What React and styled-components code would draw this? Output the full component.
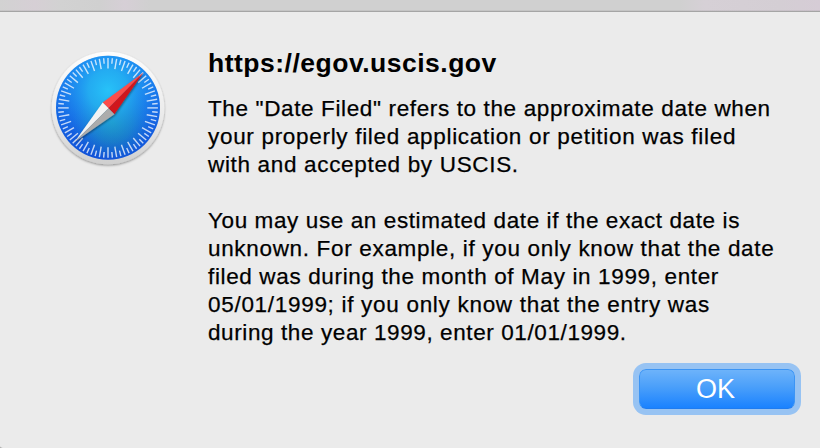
import React from "react";
import styled, { createGlobalStyle } from "styled-components";

const GlobalStyle = createGlobalStyle`
  * {
    box-sizing: border-box;
  }
  body {
    margin: 0;
    background: #a8a8a8;
    color: #000;
    font-family: "Liberation Sans", Arial, sans-serif;
  }
`;

const Dialog = styled.main`
  display: flex;
  flex-direction: column;
  width: 820px;
  height: 448px;
  overflow: hidden;
  border-bottom-left-radius: 5px 2px;
  background: #ebebeb;
`;

const Toolbar = styled.div`
  flex: none;
  height: 12px;
  border-bottom: 1px solid #a5a5a5;
  background:
    linear-gradient(rgba(0, 0, 0, 0) 10px, rgba(0, 0, 0, 0.06) 10px),
    linear-gradient(90deg, #d2d2d2 0, #d6cfd5 35px, #d2d2d2 60px, #d0d0d0 100px,
      #d6cfd6 125px, #d0d0d0 150px, #d0d0d0 680px, #d6d0d6 705px, #d4ced4 780px, #d6ccd6 820px);
`;

const Content = styled.div`
  display: flex;
  padding: 32px 0 0 44px;
`;

const Message = styled.section`
  padding: 4px 0 0 32px;
`;

const Title = styled.h1`
  margin: 0 0 17px;
  font-size: 26.5px;
  line-height: 30px;
  letter-spacing: 0.5px;
  white-space: nowrap;
`;

const Paragraph = styled.p`
  margin: 0 0 28px;
  font-size: 22.5px;
  line-height: 28px;
  -webkit-text-stroke: 0.25px #000;
`;

const Line = styled.span`
  display: block;
  letter-spacing: ${({ $spacing }) => $spacing}px;
  white-space: nowrap;
`;

const Actions = styled.div`
  display: flex;
  justify-content: flex-end;
  margin-top: -6px;
  padding-right: 25px;
`;

const Button = styled.button`
  width: 156px;
  height: 40px;
  padding: 0 3px 0 0;
  border: 1px solid #3c95f5;
  border-bottom-color: #1f7cf0;
  border-radius: 7px;
  background: linear-gradient(#6db3fa, #4a9ffa 45%, #1a82ff);
  box-shadow: 0 0 0 6px #97c3f3;
  color: #fff;
  font-family: inherit;
  font-size: 27px;
  line-height: 38px;
`;

const Icon = styled.svg`
  flex: none;
  width: 132px;
  height: 132px;
`;

const ticks = Array.from({ length: 72 }, (_, i) => i);

const paragraphs = [
  [
    ['The "Date Filed" refers to the approximate date when', 0.63],
    ["your properly filed application or petition was filed", 0.69],
    ["with and accepted by USCIS.", 0.67],
  ],
  [
    ["You may use an estimated date if the exact date is", 0.6],
    ["unknown. For example, if you only know that the date", 0.67],
    ["filed was during the month of May in 1999, enter", 0.64],
    ["05/01/1999; if you only know that the entry was", 0.7],
    ["during the year 1999, enter 01/01/1999.", 0.6],
  ],
];

const CompassIcon = () => (
  <Icon viewBox="0 0 132 132">
    <defs>
      <linearGradient id="rim" x1="0" y1="0" x2="0" y2="1">
        <stop offset="0" stopColor="#fdfdfd" />
        <stop offset="0.6" stopColor="#e9e9e9" />
        <stop offset="1" stopColor="#cfcfcf" />
      </linearGradient>
      <linearGradient id="dial" x1="0" y1="0" x2="0" y2="1">
        <stop offset="0" stopColor="#1c86f3" />
        <stop offset="1" stopColor="#1150d8" />
      </linearGradient>
      <radialGradient id="glow" cx="0.5" cy="0.33" r="0.54">
        <stop offset="0" stopColor="#27c2f8" />
        <stop offset="0.35" stopColor="#25b4f2" stopOpacity="0.85" />
        <stop offset="1" stopColor="#1c86f3" stopOpacity="0" />
      </radialGradient>
      <radialGradient id="teal" cx="0.54" cy="0.64" r="0.38">
        <stop offset="0" stopColor="#1c9ba9" stopOpacity="0.95" />
        <stop offset="0.5" stopColor="#1c8fb8" stopOpacity="0.6" />
        <stop offset="1" stopColor="#1c80d0" stopOpacity="0" />
      </radialGradient>
      <filter id="drop" x="-20%" y="-20%" width="140%" height="140%">
        <feDropShadow dx="0" dy="1.2" stdDeviation="1.2" floodOpacity="0.4" />
      </filter>
      <filter id="needleShadow" x="-20%" y="-20%" width="140%" height="140%">
        <feDropShadow dx="0.6" dy="1" stdDeviation="0.8" floodOpacity="0.5" />
      </filter>
    </defs>
    <circle cx="64" cy="64" r="56.3" fill="url(#rim)" filter="url(#drop)" />
    <circle cx="64" cy="63.7" r="52" fill="url(#dial)" />
    <circle cx="64" cy="63.7" r="52" fill="url(#teal)" />
    <circle cx="64" cy="63.7" r="52" fill="url(#glow)" />
    <g stroke="#fff" strokeOpacity="0.75" strokeWidth="1.4">
      {ticks.map((i) => (
        <line
          key={i}
          x1="64"
          x2="64"
          y1="14"
          y2={i % 2 ? 19.6 : 24.6}
          transform={`rotate(${i * 5} 64 63.9)`}
        />
      ))}
    </g>
    <g filter="url(#needleShadow)">
      <path d="M99.5 28.5 58.7 58.5 64.5 64.3Z" fill="#fb4d4b" />
      <path d="M99.5 28.5 64.5 64.3 70.4 70.2Z" fill="#d0161c" />
      <path d="M30.5 98 58.7 58.5 64.5 64.3Z" fill="#f3f3f3" />
      <path d="M30.5 98 64.5 64.3 70.4 70.2Z" fill="#acacac" />
    </g>
  </Icon>
);

export default function App() {
  return (
    <Dialog>
      <GlobalStyle />
      <Toolbar />
      <Content>
        <CompassIcon />
        <Message>
          <Title>https://egov.uscis.gov</Title>
          {paragraphs.map((lines, index) => (
            <Paragraph key={index}>
              {lines.map(([text, spacing]) => (
                <Line key={text} $spacing={spacing}>{text}</Line>
              ))}
            </Paragraph>
          ))}
        </Message>
      </Content>
      <Actions>
        <Button>OK</Button>
      </Actions>
    </Dialog>
  );
}
